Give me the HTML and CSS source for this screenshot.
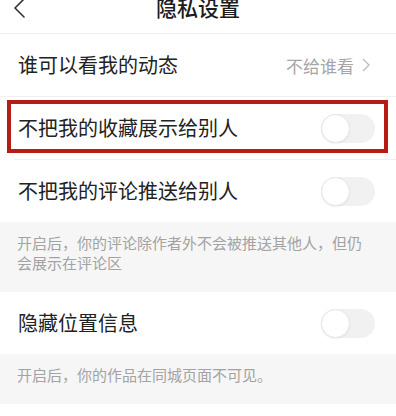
FILE: index.html
```html
<!DOCTYPE html>
<html lang="zh-CN">
<head>
<meta charset="utf-8">
<title>隐私设置</title>
<link rel="stylesheet" href="styles.css">
</head>
<body>
<div class="page">
  <header class="nav">
    <svg class="back" width="14" height="22" viewBox="0 0 14 22"><polyline points="11,2 2,11 11,20" fill="none" stroke="#333" stroke-width="1.6" stroke-linecap="round" stroke-linejoin="round"/></svg>
    <div class="title">隐私设置</div>
  </header>

  <div class="row sep-full">
    <span class="label">谁可以看我的动态</span>
    <span class="value">不给谁看<svg class="chev" width="8" height="14" viewBox="0 0 8 14"><polyline points="1,1 7,7 1,13" fill="none" stroke="#bbb" stroke-width="1.3"/></svg></span>
  </div>

  <div class="row sep-inset highlighted">
    <span class="label">不把我的收藏展示给别人</span>
    <span class="switch"><span class="knob"></span></span>
  </div>

  <div class="row">
    <span class="label">不把我的评论推送给别人</span>
    <span class="switch"><span class="knob"></span></span>
  </div>

  <p class="note">开启后，你的评论除作者外不会被推送其他人，但仍会展示在评论区</p>

  <div class="row">
    <span class="label">隐藏位置信息</span>
    <span class="switch"><span class="knob"></span></span>
  </div>

  <p class="note">开启后，你的作品在同城页面不可见。</p>
</div>
</body>
</html>
```

FILE: styles.css
```css
html, body {
  margin: 0;
  padding: 0;
  background: #ffffff;
}

body {
  font-family: "Noto Sans CJK SC", "Noto Sans", sans-serif;
  color: #222222;
  overflow: hidden;
}

.page {
  width: 396px;
}

.nav {
  position: relative;
  height: 45px;
  margin-top: -12px;
  border-bottom: 1px solid #efefef;
  display: flex;
  justify-content: center;
}

.back {
  position: absolute;
  left: 13px;
  top: 9px;
}

.title {
  font-size: 21px;
  line-height: 21px;
  padding-top: 9px;
  color: #1c1c1c;
  font-weight: 500;
}

.row {
  position: relative;
  height: 62px;
  display: flex;
  align-items: center;
  justify-content: space-between;
  padding: 0 21px 0 18px;
  background: #ffffff;
}

.sep-full {
  border-bottom: 1px solid #f0f0f0;
}

.sep-inset::before {
  content: "";
  position: absolute;
  left: 14px;
  right: 0;
  bottom: -1px;
  height: 1px;
  background: #efefef;
}

.sep-inset {
  margin-bottom: 1px;
}

.highlighted::after {
  content: "";
  position: absolute;
  left: 7px;
  right: 8px;
  top: 3px;
  bottom: 6px;
  border: 4px solid #b41c14;
}

.label {
  font-size: 20px;
  line-height: 24px;
}

.value {
  display: flex;
  align-items: center;
  gap: 8px;
  font-size: 17px;
  color: #a6a6a6;
  margin-right: 5px;
}

.chev {
  display: block;
}

.switch {
  position: relative;
  width: 54px;
  height: 29px;
  border-radius: 15px;
  background: #f1f1f1;
}

.knob {
  position: absolute;
  left: 0;
  top: 0;
  width: 27px;
  height: 27px;
  border-radius: 50%;
  background: #ffffff;
  border: 1px solid #e6e6e6;
  box-shadow: 0 1px 2px rgba(0, 0, 0, 0.06);
}

.note {
  margin: 0;
  background: #f6f6f6;
  padding: 11px 20px 19px 17px;
  font-size: 15px;
  line-height: 20px;
  color: #a3a3a3;
}
```
